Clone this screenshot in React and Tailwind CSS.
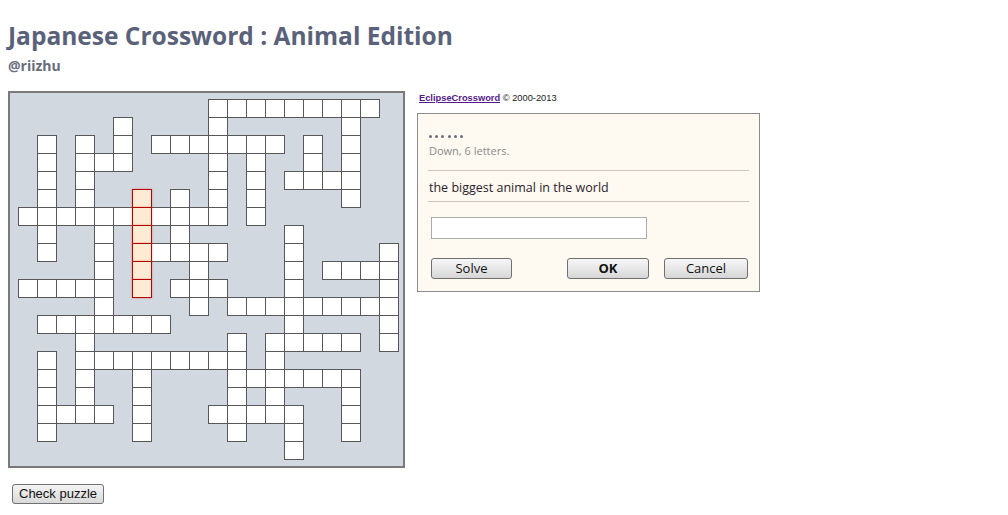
import React from 'react';

// '#' = open cell, 'H' = selected word, '.' = blocked
const GRID = [
    '..........#########.',
    '.....#....#......#..',
    '.#.#.#.#######.#.#..',
    '.#.###....#.#..#.#..',
    '.#.#......#.#.####..',
    '.#.#..H.#.#.#....#..',
    '######H####.#.......',
    '.#..#.H.#.....#.....',
    '.#..#.H####...#....#',
    '....#.H..#....#.####',
    '#####.H.###...#....#',
    '....#....#.#########',
    '.#######......#....#',
    '...#.......#.#####.#',
    '.#.#########.#......',
    '.#.#..#....#######..',
    '.#.#..#....#.#...#..',
    '.####.#...#####..#..',
    '.#....#....#..#..#..',
    '..............#.....',
];

const UI_FONT = "font-['Segoe_UI','Open_Sans',sans-serif]";

function Cell({ type }) {
    if (type === '#') {
        return <div className="w-[20px] h-[19px] border border-[#585858] bg-white" />;
    }
    if (type === 'H') {
        return <div className="relative z-10 w-[20px] h-[19px] border border-[#b50000] bg-[#fdebd3] shadow-[0_0_2px_rgba(220,0,0,0.35)]" />;
    }
    return <div />;
}

function Board() {
    return (
        <div className="w-[397px] h-[377px] border-2 border-[#7a7a7a] bg-[#d2d8e0] pl-[8px] pt-[6px]">
            <div className="grid grid-cols-[repeat(20,19px)] grid-rows-[repeat(20,18px)]">
                {GRID.map((row, r) =>
                    row.split('').map((c, i) => <Cell key={r + '-' + i} type={c} />)
                )}
            </div>
        </div>
    );
}

function DlgButton({ children, bold, className }) {
    return (
        <button
            className={`h-[21px] rounded-[3px] border border-[#707070] bg-gradient-to-b from-[#f6f6f6] via-[#e8e8e8] to-[#d6d6d6] text-[13px] leading-[19px] text-[#111] ${bold ? 'font-bold' : ''} ${UI_FONT} ${className}`}
        >
            {children}
        </button>
    );
}

function ClueBox() {
    return (
        <div className={`w-[343px] h-[179px] border border-[#8c8c8c] bg-[#fffaf1] px-[10px] pt-[16px] ${UI_FONT}`}>
            {/* masked answer */}
            <div className="pl-[1px] h-[12px] flex items-center gap-[3.2px]">
                {[0, 1, 2, 3, 4, 5].map(i => (
                    <span key={i} className="w-[3px] h-[3px] rounded-full bg-[#6c6c78]" />
                ))}
            </div>
            <div className="pl-[1px] mt-[2px] h-[14px] text-[11px] leading-[14px] text-[#8a8a8a]">Down, 6 letters.</div>
            <div className="mt-[12px] h-px bg-[#cbc4bb]" />
            <div className="pl-[1px] mt-[8px] h-[18px] text-[12.5px] leading-[18px] text-[#2b1c2e]">the biggest animal in the world</div>
            <div className="mt-[4px] h-px bg-[#cbc4bb]" />
            <div className="mt-[15px] ml-[3px] w-[216px] h-[22px] border border-[#ababab] bg-white" />
            <div className="mt-[19px] ml-[3px] mr-[1px] flex items-start">
                <DlgButton className="w-[81px]">Solve</DlgButton>
                <DlgButton className="w-[82px] ml-auto" bold>OK</DlgButton>
                <DlgButton className="w-[84px] ml-[15px]">Cancel</DlgButton>
            </div>
        </div>
    );
}

export default function App() {
    return (
        <div className="min-h-screen bg-white px-[8px] pt-[19px]">
            <h1 className="text-[24.5px] leading-[34px] font-bold text-[#5a627a] font-['Open_Sans',sans-serif]">
                Japanese Crossword : Animal Edition
            </h1>
            <div className="mt-[4px] text-[14px] leading-[18px] font-bold text-[#676d7c] font-['Open_Sans',sans-serif]">
                @riizhu
            </div>

            <div className="mt-[16px] flex items-start">
                <Board />
                <div className="ml-[12px]">
                    <div className="pl-[2px] h-[14px] text-[9.3px] leading-[14px] text-[#222] font-['Liberation_Sans',sans-serif]">
                        <a href="#" className="underline font-semibold text-[#551a8b]">EclipseCrossword</a>
                        <span> © 2000-2013</span>
                    </div>
                    <div className="mt-[8px]">
                        <ClueBox />
                    </div>
                </div>
            </div>

            <button className="mt-[16px] ml-[4px] h-[20px] px-[6px] rounded-[3px] border border-[#707070] bg-gradient-to-b from-[#f4f4f4] to-[#d9d9d9] text-[13px] leading-[18px] text-[#111] font-['Liberation_Sans',Arial,sans-serif]">
                Check puzzle
            </button>
        </div>
    );
}
